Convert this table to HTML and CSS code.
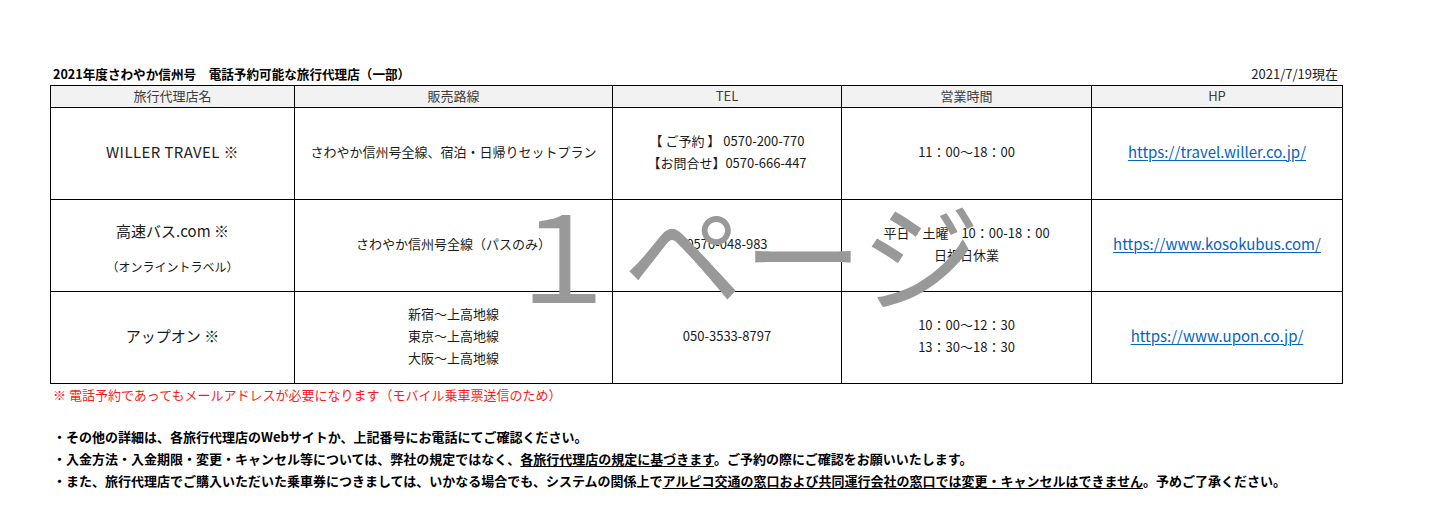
FILE: index.html
```html
<!DOCTYPE html>
<html lang="ja">
<head>
<meta charset="utf-8">
<title>2021年度さわやか信州号 電話予約可能な旅行代理店</title>
<link rel="stylesheet" href="styles.css">
</head>
<body>
<div class="sheet">
  <div class="titlebar">
    <span class="title">2021年度さわやか信州号　電話予約可能な旅行代理店（一部）</span>
    <span class="date">2021/7/19現在</span>
  </div>
  <table class="agents">
    <colgroup>
      <col class="c-name">
      <col class="c-route">
      <col class="c-tel">
      <col class="c-hours">
      <col class="c-hp">
    </colgroup>
    <thead>
      <tr>
        <th>旅行代理店名</th>
        <th>販売路線</th>
        <th>TEL</th>
        <th>営業時間</th>
        <th>HP</th>
      </tr>
    </thead>
    <tbody>
      <tr>
        <td><span class="latin">WILLER TRAVEL ※</span></td>
        <td>さわやか信州号全線、宿泊・日帰りセットプラン</td>
        <td><div class="lines"><span>【 ご予約 】 0570-200-770</span><span>【お問合せ】0570-666-447</span></div></td>
        <td>11：00〜18：00</td>
        <td><a class="link" href="#">https://travel.willer.co.jp/</a></td>
      </tr>
      <tr>
        <td><div class="stack"><span class="big">高速バス.com ※</span><span class="sub">（オンライントラベル）</span></div></td>
        <td>さわやか信州号全線（パスのみ）</td>
        <td>0570-048-983</td>
        <td><div class="lines"><span>平日・土曜　10：00-18：00</span><span>日祝日休業</span></div></td>
        <td><a class="link" href="#">https://www.kosokubus.com/</a></td>
      </tr>
      <tr>
        <td><span class="big">アップオン ※</span></td>
        <td><div class="lines"><span>新宿〜上高地線</span><span>東京〜上高地線</span><span>大阪〜上高地線</span></div></td>
        <td>050-3533-8797</td>
        <td><div class="lines"><span>10：00〜12：30</span><span>13：30〜18：30</span></div></td>
        <td><a class="link" href="#">https://www.upon.co.jp/</a></td>
      </tr>
    </tbody>
  </table>
  <p class="note">※ 電話予約であってもメールアドレスが必要になります（モバイル乗車票送信のため）</p>
  <ul class="info">
    <li>・その他の詳細は、各旅行代理店のWebサイトか、上記番号にお電話にてご確認ください。</li>
    <li>・入金方法・入金期限・変更・キャンセル等については、弊社の規定ではなく、<u>各旅行代理店の規定に基づきます</u>。ご予約の際にご確認をお願いいたします。</li>
    <li>・また、旅行代理店でご購入いただいた乗車券につきましては、いかなる場合でも、システムの関係上で<u>アルピコ交通の窓口および共同運行会社の窓口では変更・キャンセルはできません</u>。予めご了承ください。</li>
  </ul>
  <div class="watermark">１ページ</div>
</div>
</body>
</html>
```
FILE: styles.css
```css
html, body {
  margin: 0;
  padding: 0;
  background: #fff;
}

body {
  font-family: "Noto Sans CJK JP", "Noto Sans", sans-serif;
  font-size: 13px;
  color: #1a1a1a;
}

.sheet {
  position: relative;
  width: 1292px;
  margin-left: 50px;
  padding-top: 63px;
}

.titlebar {
  display: flex;
  justify-content: space-between;
  align-items: center;
  height: 21px;
  padding: 0 4px 1px 3px;
}

.title {
  font-weight: bold;
  font-size: 12.6px;
  color: #000;
}

.date {
  color: #222;
}

.agents {
  border-collapse: collapse;
  table-layout: fixed;
  width: 1292px;
}

.c-name { width: 244px; }
.c-route { width: 318px; }
.c-tel { width: 229px; }
.c-hours { width: 250px; }
.c-hp { width: 251px; }

.agents th,
.agents td {
  border: 1px solid #000;
  padding: 0;
  text-align: center;
  vertical-align: middle;
}

.agents th {
  height: 20px;
  background: #f2f2f2;
  font-weight: normal;
  color: #3c3c3c;
  line-height: 20px;
  padding-bottom: 1px;
}

.agents td {
  height: 88px;
  line-height: 20px;
  padding-bottom: 3px;
}

.lines {
  display: flex;
  flex-direction: column;
  align-items: center;
  line-height: 22px;
}

.stack {
  display: flex;
  flex-direction: column;
  align-items: center;
  padding-top: 10px;
  gap: 16px;
}

.latin {
  font-size: 15px;
  letter-spacing: 0.4px;
  color: #222;
}

.big {
  font-size: 15px;
}

.sub {
  font-size: 12px;
}

.link {
  font-size: 15px;
  color: #0563c1;
  text-decoration: underline;
  text-decoration-thickness: 1px;
  text-underline-offset: 2px;
}

.note {
  margin: 0;
  padding-left: 3px;
  height: 21px;
  line-height: 21px;
  color: #ff1a1a;
}

.info {
  list-style: none;
  margin: 21px 0 0;
  padding: 0 0 0 3px;
  font-weight: bold;
  color: #000;
}

.info li {
  line-height: 22px;
}

.info u {
  text-decoration-thickness: 1px;
  text-underline-offset: 2px;
}

.watermark {
  position: absolute;
  left: 453px;
  top: 191px;
  font-size: 120px;
  line-height: 1;
  color: #999;
  white-space: nowrap;
  pointer-events: none;
}
```
